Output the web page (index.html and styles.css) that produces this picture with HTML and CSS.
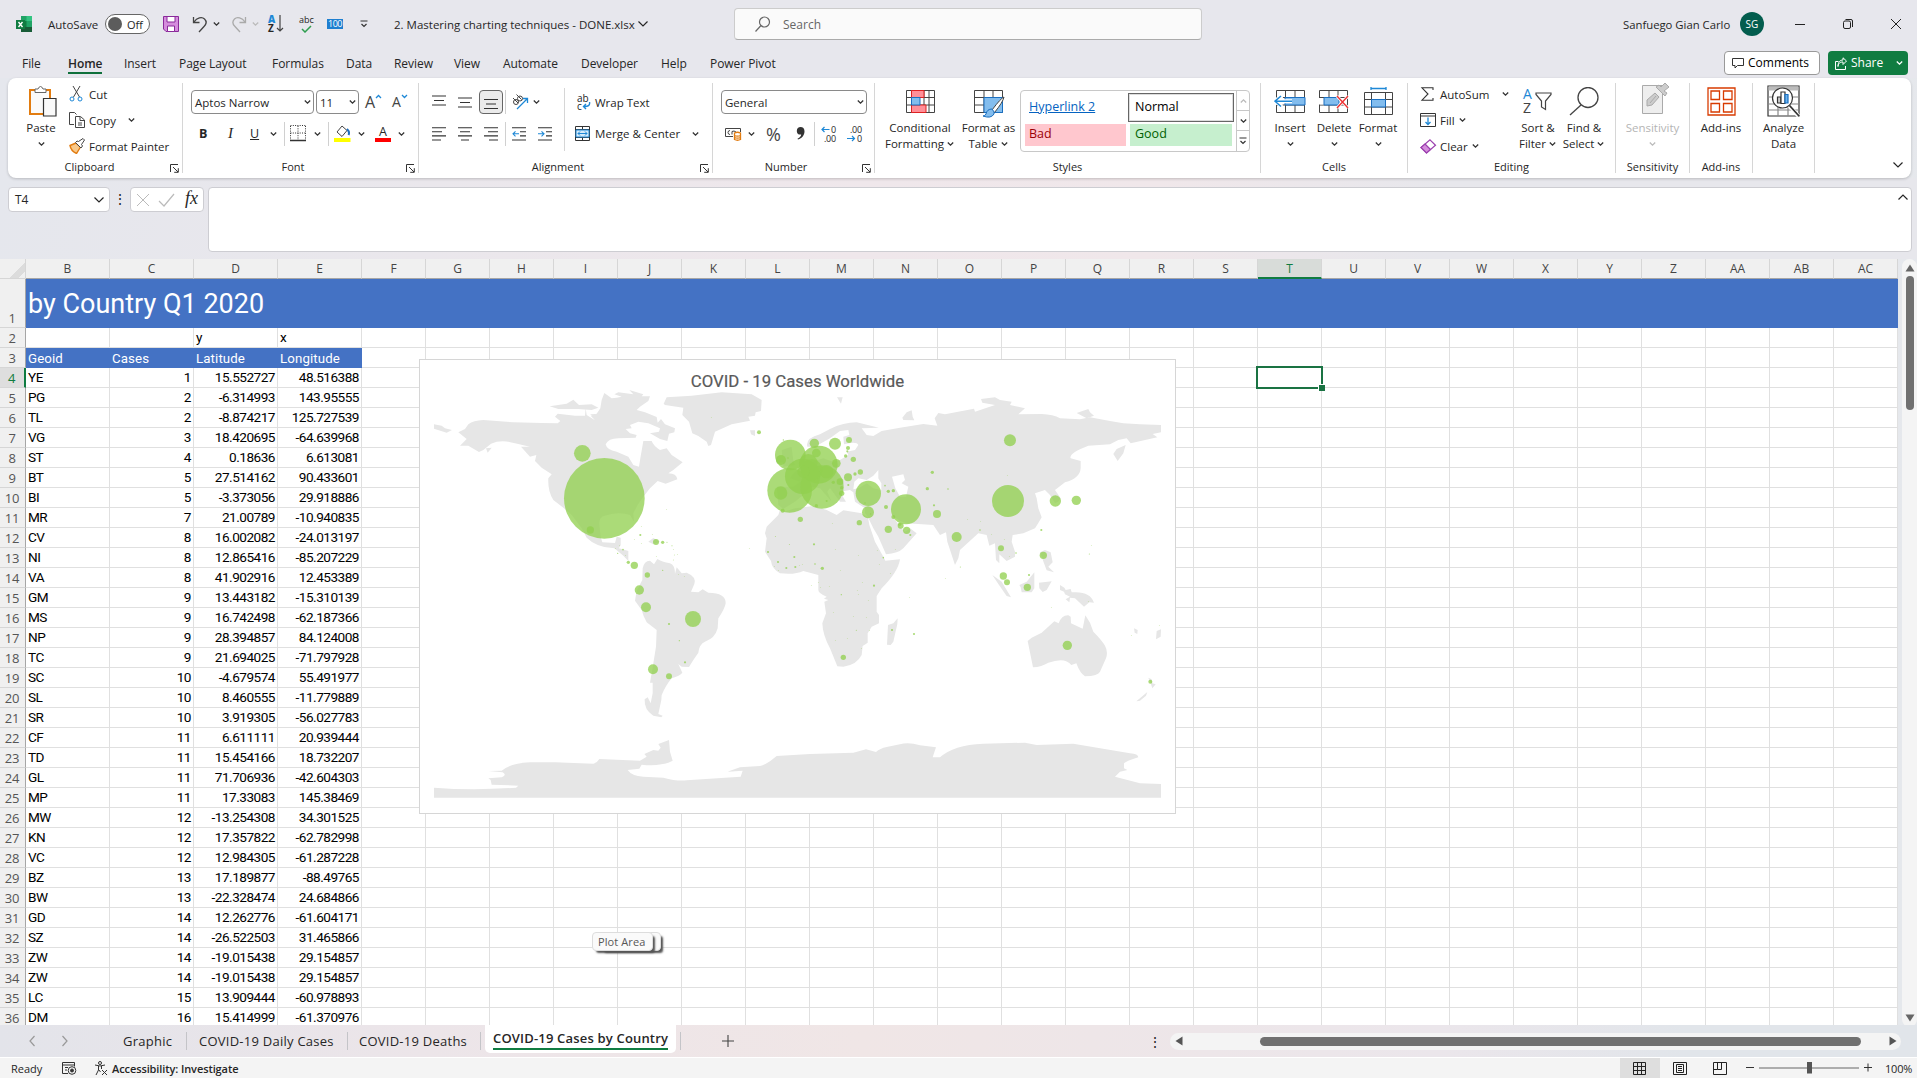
FILE: index.html
```html
<!DOCTYPE html>
<html lang="en">
<head>
<meta charset="utf-8">
<title>2. Mastering charting techniques - DONE.xlsx</title>
<link rel="stylesheet" href="styles.css">
</head>
<body>
<svg class="defs" aria-hidden="true">
  <symbol id="cv" viewBox="0 0 9 6"><path d="M1.8 1.5 4.5 4.2 7.2 1.5" fill="none" stroke="currentColor" stroke-width="1.3"/></symbol>
  <symbol id="cvl" viewBox="0 0 12 8"><path d="M1.5 1.5 6 6 10.5 1.5" fill="none" stroke="currentColor" stroke-width="1.2"/></symbol>
  <symbol id="launch" viewBox="0 0 9 9"><path d="M.5 8V.5H8M3 3l5 5M8.3 4.2v4.1H4.2" fill="none" stroke="#333"/></symbol>
</svg>

<header class="titlebar">
  <svg class="xl" width="17" height="17" viewBox="0 0 17 17"><path fill="#21a366" d="M5 0h11v16H5z"/><path fill="#33c481" d="M10.500 0h5.500v5h-5.500z"/><path fill="#107c41" d="M5 5h5.500v6H5z"/><path fill="#185c37" d="M5 11h11v5H5z"/><path fill="#107c41" d="M0 4h9v9H0z"/><path d="m2.500 6 4 5M6.500 6l-4 5" stroke="#fff" stroke-width="1.400"/></svg>
  <span>AutoSave</span>
  <span class="toggle"><i></i>Off</span>
  <svg width="17" height="17" viewBox="0 0 17 17" fill="#d58ddd" stroke="#8a2a9a"><path d="M.5.5h15v15H3l-2.500-2.500z"/><path fill="#fff" d="M4 .5h8v5.500H4zM4.500 10h7v5.500h-7z"/></svg>
  <svg width="17" height="17" viewBox="0 0 17 17" fill="none" stroke="#444" stroke-width="1.300"><path d="M1.500 1v5.500h6M2 6C5 1.500 10 .5 12.500 3s2 5-.5 7.500L7 16"/></svg>
  <svg class="cv"><use href="#cv"/></svg>
  <svg width="17" height="17" viewBox="0 0 17 17" fill="none" stroke="#aaa" stroke-width="1.300"><path d="M14.500 1v5.500h-6M14 6C11 1.500 6 .5 3.500 3s-2 5 .5 7.500L9 16"/></svg>
  <svg class="cv pale"><use href="#cv"/></svg>
  <span class="az"><b>A</b><em>Z</em><svg width="8" height="17" viewBox="0 0 8 17" fill="none" stroke="#444" stroke-width="1.200"><path d="M4 0v16M1 13l3 3 3-3"/></svg></span>
  <span class="abc">abc<svg width="11" height="8" viewBox="0 0 11 8"><path d="M1 4l3 3 6-6" fill="none" stroke="#2e9e4f" stroke-width="1.500"/></svg></span>
  <span class="hundred">100</span>
  <svg width="8" height="8" viewBox="0 0 8 8" fill="none" stroke="#333" stroke-width="1.200"><path d="M.5 1h7M1.500 4 4 6.500 6.500 4"/></svg>
  <span class="fname">2. Mastering charting techniques - DONE.xlsx</span>
  <svg width="12" height="8"><use href="#cvl"/></svg>
  <div class="search"><svg width="16" height="16" viewBox="0 0 16 16" fill="none" stroke="#666" stroke-width="1.200"><circle cx="9.500" cy="6" r="5"/><path d="m6 9.500-5.500 6"/></svg><span>Search</span></div>
  <span class="user">Sanfuego Gian Carlo</span>
  <span class="avatar">SG</span>
  <svg width="12" height="12" viewBox="0 0 12 12"><path d="M1 6.500h10" stroke="#222"/></svg>
  <svg width="12" height="12" viewBox="0 0 12 12" fill="none" stroke="#222"><rect x="1.500" y="3" width="7" height="7.500" rx="1.500"/><path d="M3.500 1.500H9q1.500 0 1.500 1.500v6"/></svg>
  <svg width="12" height="12" viewBox="0 0 12 12" stroke="#222"><path d="m1 1 10 10M11 1 1 11"/></svg>
</header>

<nav class="menu">
  <span>File</span><span class="on">Home</span><span>Insert</span><span>Page Layout</span><span>Formulas</span><span>Data</span><span>Review</span><span>View</span><span>Automate</span><span>Developer</span><span>Help</span><span>Power Pivot</span>
  <button class="comments"><svg width="12" height="12" viewBox="0 0 12 12" fill="none" stroke="#333"><path d="M.5 1.500h11v7H5.500L3 11V8.500H.5z"/></svg>Comments</button>
  <button class="share"><svg width="12" height="13" viewBox="0 0 12 13" fill="none" stroke="#fff"><path d="M3.500 4.500h-3v8h10V9M3 9.500C3.500 6 5 5 8 5v2.500L11.500 4 8 .8V3C5 3 3 5 3 9.500z"/></svg>Share<svg class="cv"><use href="#cv"/></svg></button>
</nav>

<section class="ribbon">
  <div class="group clipboard">
    <div class="body">
      <div class="big"><span class="ico"><svg width="30" height="31" viewBox="0 0 30 31"><path d="M1 4h20v24H1z" fill="#fafafa" stroke="#e27c10" stroke-width="2"/><path d="M6 6.500V3h3q1-2.500 2.500-2.500T14 3h3v3.500z" fill="#fff" stroke="#666"/><path d="M14.500 12.500H27v17.500H14.500z" fill="#fafafa" stroke="#333" stroke-width="1.200"/></svg></span><span>Paste</span><svg class="cv"><use href="#cv"/></svg></div>
      <div class="stack">
        <div><svg width="17" height="16" viewBox="0 0 17 16" fill="none" stroke="#444"><path d="M4 0l6.500 11M11 0 4.500 11"/><circle cx="3" cy="13" r="2" stroke="#1e88d6"/><circle cx="11" cy="13" r="2" stroke="#1e88d6"/></svg>Cut</div>
        <div><svg width="17" height="16" viewBox="0 0 17 16" fill="#fff" stroke="#444"><path d="M5 12.500H.5V.5h5l2 2M6.500 4.500h5L15.500 8v7.500h-9z"/><path d="M11 5v3.500h4M9 11h4M9 13h4" fill="none"/></svg>Copy<svg class="cv gap"><use href="#cv"/></svg></div>
        <div><svg width="17" height="16" viewBox="0 0 17 16"><path d="M7 5 1 7.500Q2 13 7.500 15.500L11.500 9z" fill="#f9c98a" stroke="#e27c10" stroke-width="1.400"/><path d="m6.500 4.500 5.500 5.500 1.500-2-1-1.500 3-4.500-1.500-1.500L9.500 3.500 8 3z" fill="#fff" stroke="#444"/></svg>Format Painter</div>
      </div>
    </div>
    <div class="label">Clipboard<svg class="launch"><use href="#launch"/></svg></div>
  </div>

  <div class="group font">
    <div class="body rows">
      <div class="r1"><span class="combo">Aptos Narrow<svg class="cv"><use href="#cv"/></svg></span><span class="combo">11<svg class="cv"><use href="#cv"/></svg></span><span class="fs1">A<svg width="7" height="5" viewBox="0 0 7 5"><path d="M1 4 3.500 1.500 6 4"/></svg></span><span class="fs2">A<svg width="7" height="5" viewBox="0 0 7 5"><path d="M1 1 3.500 3.500 6 1"/></svg></span></div>
      <div class="r2"><b>B</b><i>I</i><u>U</u><svg class="cv"><use href="#cv"/></svg><hr>
        <svg width="16" height="17" viewBox="0 0 16 17" fill="none" stroke="#333"><path d="M.5.5h15M.5 8h15M.5 1v14M8 1v14M15.500 1v14" stroke-dasharray="1 1.300"/><path d="M0 15.500h16" stroke-width="1.500"/></svg><svg class="cv"><use href="#cv"/></svg><hr>
        <svg width="17" height="17" viewBox="0 0 17 17"><path d="m8 1-5 6 5 4.500 5-6z" fill="#fff" stroke="#444"/><path d="M13 4q3 3 1.500 6" stroke="#1e6fc0" stroke-width="2" fill="none"/><path fill="#ff0" d="M0 13h16.500v4H0z"/></svg><svg class="cv"><use href="#cv"/></svg>
        <span class="acol">A</span><svg class="cv"><use href="#cv"/></svg></div>
    </div>
    <div class="label">Font<svg class="launch"><use href="#launch"/></svg></div>
  </div>

  <div class="group align">
    <div class="body">
      <div class="rows left">
        <div class="r1"><svg width="15" height="14" viewBox="0 0 15 14" stroke="#333" stroke-width="1.100"><path d="M0 1h14M2 5.500h10M0 10h14"/></svg><svg width="15" height="14" viewBox="0 0 15 14" stroke="#333" stroke-width="1.100"><path d="M0 3h14M2 7.500h10M0 12h14"/></svg><span class="pressed"><svg width="15" height="14" viewBox="0 0 15 14" stroke="#333" stroke-width="1.100"><path d="M0 13.500h14M2 9h10M0 4.500h14"/></svg></span><hr><svg width="17" height="16" viewBox="0 0 17 16" fill="none"><circle cx="4" cy="8" r="2.500" stroke="#444"/><circle cx="8" cy="4.500" r="2.500" stroke="#444"/><path d="m1 4 5 5M4.500.5l5 5" stroke="#444"/><path d="m5 15 10-10M11 4.500h4.500V9" stroke="#1e88d6" stroke-width="1.300"/></svg><svg class="cv"><use href="#cv"/></svg></div>
        <div class="r2"><svg width="15" height="14" viewBox="0 0 15 14" stroke="#333" stroke-width="1.100"><path d="M0 .7h14M0 4.800h10M0 8.900h14M0 13h9"/></svg><svg width="15" height="14" viewBox="0 0 15 14" stroke="#333" stroke-width="1.100"><path d="M0 .7h14M2 4.800h10M0 8.900h14M3 13h8"/></svg><svg width="15" height="14" viewBox="0 0 15 14" stroke="#333" stroke-width="1.100"><path d="M0 .7h14M4 4.800h10M0 8.900h14M5 13h9"/></svg><hr><svg width="15" height="14" viewBox="0 0 15 14" stroke="#333" stroke-width="1.100" fill="none"><path d="M0 .7h14M8 4.800h6M8 8.900h6M0 13h14"/><path d="M7 6.800H1M3.500 4.300 1 6.800l2.500 2.500" stroke="#1e88d6"/></svg><svg width="15" height="14" viewBox="0 0 15 14" stroke="#333" stroke-width="1.100" fill="none"><path d="M0 .7h14M8 4.800h6M8 8.900h6M0 13h14"/><path d="M0 6.800h6M3.500 4.300 6 6.800 3.500 9.300" stroke="#1e88d6"/></svg></div>
      </div>
      <div class="rows right">
        <div class="r1"><span class="wrapico"><span>ab</span><span>c<svg width="9" height="8" viewBox="0 0 9 8" fill="none" stroke="#1e88d6" stroke-width="1.400"><path d="M7.500 0q1 5-6 4.500M4 2 1.500 4.500 4 7"/></svg></span></span><span>Wrap Text</span></div>
        <div class="r2"><svg width="16" height="15" viewBox="0 0 16 15" fill="none" stroke="#333"><path d="M.5.5h14v14H.5zM.5 3.500h14M.5 11.500h14M7.500.5v3M7.500 11.500v3"/><path d="M1 4h13v7H1z" fill="#d5ebfa" stroke="#1e88d6"/><path d="M3 7.500h9M5 5.500l-2 2 2 2M10 5.500l2 2-2 2" stroke="#1e88d6"/></svg><span>Merge &amp; Center</span><svg class="cv"><use href="#cv"/></svg></div>
      </div>
    </div>
    <div class="label">Alignment<svg class="launch"><use href="#launch"/></svg></div>
  </div>

  <div class="group number">
    <div class="body rows">
      <div class="r1"><span class="combo">General<svg class="cv"><use href="#cv"/></svg></span></div>
      <div class="r2"><svg width="17" height="14" viewBox="0 0 17 14" fill="none" stroke="#444"><path d="M8 9.500H.5v-8h15V5"/><path d="M5 3.500q-2 0-2 2t2 2M7 7.500v-3l2-.5 2 1"/><path d="M9.500 6q3-1.500 6 0v6.500q-3 1.500-6 0zM9.500 8.500q3 1.200 6 0M9.500 10.500q3 1.200 6 0" fill="#fff" stroke="#e27c10" stroke-width="1.300"/></svg><svg class="cv"><use href="#cv"/></svg><span class="pct">%</span><svg width="9" height="13" viewBox="0 0 9 13"><path d="M4.500 0C7 0 8.500 1.600 8.500 4.200c0 4-2.500 7-6.500 8.300l-.5-.8c2.500-1.200 3.500-2.500 3.700-4.200C2.500 8 .8 6.300.8 3.900.8 1.500 2.400 0 4.500 0z" fill="#333"/></svg><hr>
        <span class="dec"><span><svg width="9" height="7" viewBox="0 0 9 7"><path d="M8.500 3.500H1M3.500 1 1 3.500 3.500 6"/></svg>0</span><span>.00</span></span>
        <span class="dec"><span>.00</span><span><svg width="9" height="7" viewBox="0 0 9 7"><path d="M0 3.500h7.500M5 1l2.500 2.500L5 6"/></svg>0</span></span></div>
    </div>
    <div class="label">Number<svg class="launch"><use href="#launch"/></svg></div>
  </div>

  <div class="group styles">
    <div class="body">
      <div class="big"><span class="ico"><svg width="29" height="23" viewBox="0 0 29 23" fill="none" stroke="#444"><path d="M.5.5h28v22H.5zM.5 7.500h28M.5 15h28M5.500.5v22M18 .5v22M23 .5v22"/><path d="M5.500.5H18v7H5.500zM5.500 15H20v7.500H5.500z" fill="#ff8f98" stroke="#d22"/><path d="M5.500 7.500H14V15H5.500z" fill="#83bdee" stroke="#1a6fc0"/></svg></span><span>Conditional</span><span>Formatting<svg class="cv"><use href="#cv"/></svg></span></div>
      <div class="big"><span class="ico tbl"><svg width="31" height="28" viewBox="0 0 31 28" fill="none" stroke="#444"><path d="M.5.5h28v22H.5zM.5 7.500h28M.5 15h28M10 .5v22M19 .5v22"/><path d="M10 7.500h18.500v15H10z" fill="#83bdee" stroke="#1a6fc0"/><path d="M30 7q-3 1-12 13l2.500 2.500Q29 12 30 7z" fill="#fff"/><path d="M18 19q-5 0-6 5-1 2-3 2 8 3 11-2 1-2-2-5z" fill="#83bdee" stroke="#1a6fc0"/></svg></span><span>Format as</span><span>Table<svg class="cv"><use href="#cv"/></svg></span></div>
      <div class="gallery"><div class="cells"><span class="hl">Hyperlink 2</span><span class="nm">Normal</span><span class="bad">Bad</span><span class="good">Good</span></div><div class="gbtn"><svg class="cv pale up"><use href="#cv"/></svg><svg class="cv"><use href="#cv"/></svg><svg width="8" height="8" viewBox="0 0 8 8" fill="none" stroke="#333" stroke-width="1.200"><path d="M.5 1h7M1.500 4 4 6.500 6.500 4"/></svg></div></div>
    </div>
    <div class="label">Styles</div>
  </div>

  <div class="group cellsg">
    <div class="body">
      <div class="big"><span class="ico"><svg width="32" height="23" viewBox="0 0 32 23" fill="none" stroke="#444"><path d="M2.500 7V.5h28v22h-28V15M11.500.5v22M21 .5v22M2.500 7.500h28M2.500 15h28"/><path d="M11 7.500h20V15H11z" fill="#83bdee" stroke="#1a6fc0"/><path d="M8 6 1.500 11.200 8 16.500M2 11.200h16" stroke="#fff" stroke-width="4"/><path d="M7 6 1 11.200l6 5.300M1 11.200h17" stroke="#1e88d6" stroke-width="1.500"/></svg></span><span>Insert</span><svg class="cv"><use href="#cv"/></svg></div>
      <div class="big"><span class="ico"><svg width="30" height="23" viewBox="0 0 30 23" fill="none" stroke="#444"><path d="M.5.5h28v22H.5zM10 .5v22M19 .5v22M.5 7.500h28M.5 15h28"/><path d="M-1 8h6v6.500h-6z" fill="#fff" stroke="none"/><path d="M5 7.500h15V15H5z" fill="#83bdee" stroke="#1a6fc0"/><path d="m18 6 11 12M29 6 18 18" stroke="#fff" stroke-width="3"/><path d="m18 6 11 12M29 6 18 18" stroke="#e33" stroke-width="1.400"/></svg></span><span>Delete</span><svg class="cv"><use href="#cv"/></svg></div>
      <div class="big"><span class="ico"><svg width="29" height="28" viewBox="0 0 29 28" fill="none" stroke="#444"><path d="M.5 5.500h28v22H.5zM7.500 5.500v22M21.500 5.500v22M.5 12.500h28M.5 20h28"/><path d="M7.500 12.500h14V20h-14z" fill="#83bdee" stroke="#1a6fc0"/><path d="M7.500 1.500h14M7 0v3M22 0v3" stroke="#1e88d6" stroke-width="1.300"/></svg></span><span>Format</span><svg class="cv"><use href="#cv"/></svg></div>
    </div>
    <div class="label">Cells</div>
  </div>

  <div class="group editing">
    <div class="body">
      <div class="stack">
        <div><svg width="17" height="14" viewBox="0 0 17 14" fill="none" stroke="#333" stroke-width="1.100"><path d="M13 3V.8H2L8 7l-6 6.200h11V11"/></svg>AutoSum<svg class="cv end"><use href="#cv"/></svg></div>
        <div><svg width="17" height="14" viewBox="0 0 17 14" fill="none" stroke="#333"><path d="M.5.5h15v13H.5zM.5 3h15"/><path d="M8 4.500v7M5.500 9 8 11.500 10.500 9" stroke="#1e88d6" stroke-width="1.300"/></svg>Fill<svg class="cv"><use href="#cv"/></svg></div>
        <div><svg width="17" height="15" viewBox="0 0 17 15" fill="#fff" stroke="#9b3fae" stroke-width="1.200"><path d="m10 .8 5.500 5.500L6.500 14 1 8.500z"/><path d="m5 5 5.500 5.500-4 3.500L1 8.500z" fill="#d58ddd"/></svg>Clear<svg class="cv"><use href="#cv"/></svg></div>
      </div>
      <div class="big"><span class="ico"><span class="azb"><b>A</b><em>Z</em><svg width="17" height="19" viewBox="0 0 17 19" fill="none" stroke="#444" stroke-width="1.200"><path d="M1 1h15v1.500L10.500 9v8.500L6.500 15V9L1 2.500z"/></svg></span></span><span>Sort &amp;</span><span>Filter<svg class="cv"><use href="#cv"/></svg></span></div>
      <div class="big"><span class="ico"><svg width="30" height="29" viewBox="0 0 30 29" fill="none" stroke="#444" stroke-width="1.300"><circle cx="19" cy="10.500" r="10"/><path d="M12 18 1 28"/></svg></span><span>Find &amp;</span><span>Select<svg class="cv"><use href="#cv"/></svg></span></div>
    </div>
    <div class="label">Editing</div>
  </div>

  <div class="group sens">
    <div class="body"><div class="big off"><span class="ico"><svg width="28" height="31" viewBox="0 0 28 31" fill="#eee" stroke="#aaa"><path d="M.5 2.500h20v28H.5z"/><path d="m5 17 8-7 4 4-7 8-5 1zM14 4l9 9 2-3-3-2 5-4-4-4-4 4-2-2z" fill="#ccc"/><path d="m8 20 6-7"/></svg></span><span>Sensitivity</span><svg class="cv"><use href="#cv"/></svg></div></div>
    <div class="label">Sensitivity</div>
  </div>
  <div class="group addins">
    <div class="body"><div class="big"><span class="ico"><svg width="29" height="29" viewBox="0 0 29 29" fill="none" stroke="#d83b01" stroke-width="1.300"><path d="M1 1h27v27H1zM4 4h8.500v8.500H4zM16.500 4H25v8.500h-8.500zM4 16.500h8.500V25H4zM16.500 16.500H25V25h-8.500z"/></svg></span><span>Add-ins</span></div></div>
    <div class="label">Add-ins</div>
  </div>
  <div class="group analyze">
    <div class="body"><div class="big"><span class="ico"><svg width="33" height="32" viewBox="0 0 33 32" fill="none" stroke="#333" stroke-width="1.200"><path d="M1 1h31v30H1z" fill="#fff"/><path d="M1.500 1.500h30v4h-30z" fill="#bbb" stroke="none"/><path d="M1 12h31M1 19h31M1 25h31M11 19v12M21 19v12" stroke="#888"/><circle cx="15.500" cy="13" r="10" fill="#fff"/><path d="M10.500 12h3.500v6h-3.500z" fill="#ccc"/><path d="M14 7h4v11.500h-4z" fill="#fff"/><path d="M18 9.500h3v8.500h-3z" fill="#6db4f0" stroke="#1a6fc0"/><path d="m22.500 21 9 10" stroke="#fff" stroke-width="4"/><path d="m22.500 20.500 9.500 10.500" stroke-width="1.800"/></svg></span><span>Analyze</span><span>Data</span></div></div>
    <div class="label"></div>
  </div>
  <svg class="collapse" width="12" height="8"><use href="#cvl"/></svg>
</section>

<section class="formula">
  <div class="namebox">T4<svg width="12" height="8"><use href="#cvl"/></svg></div>
  <div class="dots">⋮</div>
  <div class="fx"><svg width="14" height="14" viewBox="0 0 14 14" stroke="#bbb" fill="none"><path d="m1 1 12 12M13 1 1 13"/></svg><svg width="17" height="14" viewBox="0 0 17 14" stroke="#bbb" fill="none" stroke-width="1.200"><path d="m1 8 5 5L16 1"/></svg><i>fx</i></div>
  <div class="input"><svg class="up" width="12" height="8"><use href="#cvl"/></svg></div>
</section>

<main class="work">
  <div class="sheet" id="sheet">
    <div class="chart">
      <h2>COVID - 19 Cases Worldwide</h2>
      <svg width="757" height="455" viewBox="419 359 757 455">
        <g fill="#e6e6e6">
          <g transform="translate(415 355) scale(.33333)">
            <path d="M130 232 150 222 160 208Q175 196 205 195L295 202 380 204 428 205 436 198 420 185 428 176 480 182 510 182 512 160 515 180 540 196 527 182 545 176 556 160 560 135 568 114 590 130 605 128 620 125 598 118 610 112 655 118 643 105 685 118 680 124 705 124 700 138 675 155 665 165 690 172 725 186 728 203 738 192 750 208 780 220 778 232 762 236 757 258 735 252 705 235 732 230 735 220 700 205 670 200 645 210 650 220 632 222 645 235 665 240 662 248 610 250Q580 250 572 268 575 285 605 290L640 305 655 330 672 335 676 310 685 258 710 258Q715 272 735 285L755 280 770 300 803 322 775 345 760 355Q785 355 787 373L752 386 728 378 705 400 685 425 668 450 655 475 657 500 645 480Q610 468 570 482 553 485 553 505L557 545 562 562 600 564 605 545 617 548 617 570 612 580 640 588 640 618 625 602 598 580Q545 578 515 548L500 520 470 480 447 460 415 435Q398 410 400 370L410 358 380 338 360 318 364 300 345 305 318 275 345 275 300 265Q260 252 228 266L205 285 192 291 160 272 135 272 155 252ZM213 280 230 278 218 293Z"/>
            <path d="M57 208 80 212 90 220 111 225 95 233 57 221ZM404 154 455 146 475 134 492 150 530 148 550 158 530 165 490 162 430 162ZM525 178 545 177 556 187 540 187ZM746 146 755 127 830 122 920 112 1010 118 1040 135 1038 168 1022 172 1020 182 1000 185 1005 197 950 208 900 230 888 270 880 273 875 260 850 243 832 235 822 200 802 180 805 158 750 150ZM1005 226 1020 226 1020 243 1008 238ZM700 560 715 549 735 560 715 568Z"/>
          </g>
          <g transform="translate(740 355) scale(.33333)">
            <path d="M80 515 115 480 120 465 130 470 165 460 220 453 260 465 290 480 310 466 365 475 384 487 388 510 405 560 430 605 436 617 480 613Q475 650 425 700L410 723 410 770 417 780 417 805 395 815 383 835 383 863 368 873 365 900Q350 930 310 935L292 934 270 880Q248 840 247 805L258 775 253 740 265 735 252 731 260 725Q235 715 235 705L235 660 190 648Q165 660 120 655 95 640 93 618L75 590 80 550 75 535ZM125 285 155 275 160 315 165 330 130 335ZM108 305 128 300 130 322 110 325Z"/>
            <path d="M110 395 115 450 130 462 165 440 190 420 215 395 240 400 275 440 262 410 270 400 300 440 318 440 300 410 330 405 340 412 345 440 375 460 375 475 384 487 400 520 415 545 438 598Q475 595 490 580L530 535 510 520 495 530 480 515 455 480 480 498 500 505 580 510 600 540 618 532 622 560 645 630 655 610 660 585 715 535 740 540 748 572 765 565 768 615 778 625 778 598 800 618 825 605 825 590 815 560 818 540 850 535 885 520Q895 505 905 487L895 460 890 430 885 415 915 405 930 420 945 445 955 440 962 430 945 405 975 382Q1020 370 1022 340L1022 318 992 310Q985 295 1045 272L1110 268 1135 255 1160 250 1172 265 1252 247 1238 237 1263 232 1263 210 1200 208 1150 205 1110 198 1050 187 1020 193 960 190Q940 178 905 177L835 178 855 160 810 150 815 140 780 135 765 127 723 132 727 143 765 150 705 170 702 161 615 178 595 174 584 190 592 212 550 207 480 218 425 228 400 243 380 240 365 220 417 218 350 202Q310 202 270 222L240 238Q195 250 202 275L225 275 270 250 300 228 325 225 328 240 310 245 312 268Q350 258 355 270L345 285 320 290 325 300 300 315 280 320 250 310 215 320 190 330 160 355 150 370 180 380 160 395Z"/>
            <path d="M487 188 500 172 515 166 518 185 523 196 490 195ZM291 127 308 127 303 146ZM1010 174 1045 162 1050 172 1062 182 1040 190ZM1120 297 1130 282 1157 270 1150 295 1133 318ZM900 592 915 585 932 592 938 622 925 635 942 652 920 646 912 625Z"/>
            <path fill="#fff" d="M340 403 343 380 355 370 380 375 400 362 415 345 415 370 424 385 424 405 400 400 380 385 355 400ZM456 365 490 358 495 375 485 385 505 395 498 425 480 425 466 400Z"/>
          </g>
          <g transform="translate(500 560) scale(.33333)">
            <path d="M405 122 410 92 427 60 428 25Q432 3 450 2L462 13 472-3Q485 5 510 10 525 15 525 42L530 22 545 40 560 38Q590 50 583 72L573 95 595 97 608 88 625 98Q678 98 677 130 675 145 655 175L653 205Q645 235 615 245 598 252 595 278L580 300 567 321 545 320 535 312 547 338Q540 347 515 355 498 375 485 405L484 420 475 462 488 467 484 472 460 467Q432 450 434 418L443 412 452 430 458 400 458 368 450 368 460 310 468 260 470 210 440 187Q430 170 425 150Z"/>
            <path d="M-198 683Q-80 692 48 683L55 677-25 674-28 660-35 655 5 652Q22 645 8 637L-35 633 5 632Q30 610 90 607L165 607 280 611Q292 608 298 597L420 602 440 590 433 582 460 570 475 572 482 563 475 552 507 540 510 575 518 602Q485 620 425 614L418 626 383 630Q395 648 430 650L490 653Q530 664 560 661L722 650 728 632 682 635 720 622 780 618Q800 614 830 588L930 582 1060 578 1098 568 1128 576Q1140 565 1160 561L1200 553Q1225 545 1260 556L1308 562 1298 592 1320 592Q1360 555 1450 551L1575 548 1610 555 1720 551 1890 580Q1915 582 1915 592 1880 602 1872 610L1872 625 1882 630 1860 635 1845 650 1920 670 1983 672 1983 713-198 713Z"/>
          </g>
          <g transform="translate(860 560) scale(.33333)">
            <path d="M84 195 100 190 113 175 112 192 100 245 92 255 81 254ZM397 45 425 65 453 112 440 108 415 72ZM478 75 500 65 523 37 523 85 515 97 485 97 482 82ZM537 68 575 64 560 90 548 96 538 85ZM600 75 613 83 617 90 632 87 635 97Q690 92 702 128L688 127 672 140 645 115 630 113 628 127 617 118 630 110 615 103 612 95 600 90ZM503 243 515 233 545 218 583 184 596 190Q605 165 625 166L632 170 633 190 668 206 676 166 690 188 700 215Q725 240 735 257 745 275 738 295L720 335Q715 347 675 349 660 340 649 310L634 315Q615 290 565 308 545 320 519 322ZM865 353 875 358 877 370 887 373 877 385 872 370ZM829 424 862 396 858 407 840 422ZM822 205 833 210 832 222 824 218ZM890 213 903 208 902 230 888 238Z"/>
          </g>
        </g>
        <g id="bubbles" fill="#92d050" fill-opacity=".77"></g>
      </svg>
    </div>
    <div class="cursor"></div>
    <div class="tip back"></div><div class="tip">Plot Area</div>
  </div>
  <div class="vscroll"><svg width="10" height="8" viewBox="0 0 10 8"><path d="M5 .5 9.500 7.500H.5z" fill="#666"/></svg><i></i><svg width="10" height="8" viewBox="0 0 10 8"><path d="M5 7.500 9.500.5H.5z" fill="#666"/></svg></div>
</main>

<footer class="tabs">
  <svg width="8" height="12" viewBox="0 0 8 12"><path d="M6.500 1 2 6l4.500 5" fill="none" stroke="#999" stroke-width="1.200"/></svg>
  <svg width="8" height="12" viewBox="0 0 8 12"><path d="M1.500 1 6 6l-4.500 5" fill="none" stroke="#999" stroke-width="1.200"/></svg>
  <span>Graphic</span><hr><span>COVID-19 Daily Cases</span><hr><span>COVID-19 Deaths</span><hr>
  <span class="active"><b>COVID-19 Cases by Country</b></span><hr>
  <svg width="12" height="12" viewBox="0 0 12 12"><path d="M6 0v12M0 6h12" stroke="#444" stroke-width="1.100"/></svg>
  <span class="vd">⋮</span>
  <div class="hscroll"><svg width="8" height="10" viewBox="0 0 8 10"><path d="M.5 5 7.500.5v9z" fill="#555"/></svg><i></i><svg width="8" height="10" viewBox="0 0 8 10"><path d="M7.500 5 .5.5v9z" fill="#555"/></svg></div>
</footer>

<div class="status">
  <span>Ready</span>
  <svg width="15" height="14" viewBox="0 0 15 14" fill="none" stroke="#333"><path d="M6 12.500H.5v-11h12v4M.5 4h12M3 6.500h3M3 9h2"/><circle cx="10" cy="9.500" r="3.800"/><circle cx="10" cy="9.500" r="1.500" fill="#333"/></svg>
  <svg width="15" height="15" viewBox="0 0 15 15" fill="none" stroke="#333"><circle cx="6" cy="2" r="1.500"/><path d="M1 4q5 2 10 0M4.500 5v4L2 14M7.500 5v3M5 9l1.500 2M8 9l5 5M13 9l-5 5"/></svg>
  <b>Accessibility: Investigate</b>
  <span class="view on"><svg width="14" height="13" viewBox="0 0 14 13" fill="none" stroke="#222"><path d="M.5.5h12v12H.5zM4.500.5v12M8.500.5v12M.5 4.500h12M.5 8.500h12"/></svg></span>
  <span class="view"><svg width="14" height="13" viewBox="0 0 14 13" fill="none" stroke="#222"><path d="M.5.5h13v12H.5zM3.500 2.500h7v8h-7zM5 4.500h4M5 6.500h4M5 8.500h4"/></svg></span>
  <span class="view"><svg width="14" height="13" viewBox="0 0 14 13" fill="none" stroke="#222"><path d="M.5.5h13v12H.5zM4.500.5v7h4v-7M.5 7.500h4"/></svg></span>
  <span class="zoom"><svg width="130" height="12" viewBox="0 0 130 12"><path d="M1 5.500h8M119 5.500h8M123 1.500v8" stroke="#333" fill="none"/><path d="M14 6h100" stroke="#666"/><path d="M62 0h5v11.500h-5z" fill="#555"/></svg>100%</span>
</div>
<script src="sheet.js"></script>
</body>
</html>
```
FILE: styles.css
```css
* { box-sizing: border-box; }
body { margin: 0; width: 1917px; height: 1078px; overflow: hidden; display: flex; flex-direction: column; font: 11.5px "Open Sans", "Noto Sans", sans-serif; color: #262626; background: linear-gradient(100deg, #e5e7ed 0%, #e7e7ee 30%, #efe7eb 50%, #e7e7ec 70%, #e5e8ec 100%); }
svg { display: block; flex: none; }
.defs { position: absolute; width: 0; height: 0; }
.cv { width: 9px; height: 6px; color: #333; }
.pale { color: #bbb; }
.up { transform: rotate(180deg); }
hr { margin: 0; border: 0; width: 1px; background: #d0d0d0; }
button { font: inherit; }

.titlebar { height: 46px; flex: none; padding: 3px 0 0 16px; background: #e7e7ed; display: grid; align-items: center; white-space: nowrap;
  grid-template-columns: 32px 57px 58px 29px 20px 19px 20px 17px 31px 28px 33px 34px 243px 97px 889px 116px 55px 48px 48px 12px; }
.titlebar > * { margin-top: -1px; }
.toggle { width: 45px; height: 20px; border: 1px solid #666; border-radius: 10px; background: #fff; display: flex; align-items: center; gap: 5px; padding-left: 2px; font-size: 11px; }
.toggle i { width: 14px; height: 14px; border-radius: 50%; background: #5c5c5c; }
.az { display: grid; grid-template: 9px 9px / 8px 9px; font: bold 10px/9px "Open Sans", sans-serif; }
.az b { color: #1e88d6; }
.az em { font-style: normal; grid-row: 2; }
.az svg { grid-column: 2; grid-row: 1 / 3; }
.abc { font-size: 9px; line-height: 8px; display: flex; flex-direction: column; width: 15px; align-items: center; gap: 1px; }
.hundred { width: 16px; height: 10px; background: #1e7fd0; color: #fff; font-size: 9px; line-height: 10px; text-align: center; letter-spacing: -.5px; }
.search { width: 468px; height: 32px; background: #fafafa; border: 1px solid #ccc; border-bottom-color: #aaa; border-radius: 4px; display: flex; align-items: center; gap: 12px; padding-left: 20px; color: #666; font-size: 12px; }
.avatar { width: 24px; height: 24px; border-radius: 50%; background: #035d4e; color: #fff; text-align: center; line-height: 24px; font-size: 10px; margin-left: 1px; }
.user { font-size: 11.3px; }

.menu { height: 32px; flex: none; padding: 5px 0 0 22px; background: #e7e7ed; display: grid; font-size: 12px; white-space: nowrap; line-height: 26px;
  grid-template-columns: 46px 56px 55px 93px 74px 48px 60px 49px 78px 80px 49px 1014px 104px 80px; letter-spacing: -.05px; }
.menu .on { font-weight: 600; justify-self: start; height: 23px; border-bottom: 2px solid #0f703b; letter-spacing: -.1px; }
.menu button { height: 24px; border-radius: 4px; display: flex; align-items: center; gap: 4px; padding: 0 7px; }
.comments { width: 96px; border: 1px solid #999; background: #fff; }
.share { width: 80px; border: 0; background: #107c41; color: #fff; }
.share .cv { color: #fff; margin-left: 8px; }

.ribbon { margin: 0 6px 0 8px; height: 100px; flex: none; padding-top: 4px; background: #fff; border-radius: 8px; box-shadow: 0 1px 3px #0003; display: flex; position: relative; white-space: nowrap; }
.group { flex: none; height: 90px; border-right: 1px solid #d6d6d6; display: flex; flex-direction: column; margin-top: 1px; }
.body { height: 77px; flex: none; display: flex; }
.label { height: 16px; line-height: 16px; flex: none; font-size: 11px; margin-top: -1px; text-align: center; display: flex; justify-content: center; position: relative; }
.launch { width: 9px; height: 9px; position: absolute; right: 3px; top: 5px; }
.big { display: flex; flex-direction: column; align-items: center; margin-top: -1px; line-height: 16px; }
.big > span { display: flex; align-items: center; gap: 2px; }
.big > .cv { margin-top: 5px; }
.big .ico { height: 38px; }
.off { color: #b5b5b5; }
.off .cv { color: #bbb; }
.stack > div { height: 26px; display: flex; align-items: center; gap: 3px; }
.stack { margin-top: -2px; }
.stack .gap { margin-left: 8px; }
.stack .end { margin-left: auto; }
.rows { flex-direction: column; padding-top: 5px; }
.r1, .r2 { display: grid; align-items: center; }
.r1 { height: 28px; }
.r2 { height: 35px; }
.r1 hr, .r2 hr { height: 24px; }
.combo { height: 24px; border: 1px solid #8a8a8a; border-radius: 4px; display: flex; align-items: center; justify-content: space-between; padding: 0 1px 0 3px; }

.clipboard { width: 175px; }
.clipboard .big { width: 66px; }
.clipboard .big .ico { padding-left: 5px; }
.clipboard .stack { margin-left: -5px; }
.clipboard .label { padding-right: 11px; }
.font { width: 236px; }
.font .r1 { grid-template-columns: 125px 49px 27px 20px; padding-left: 8px; }
.font .combo { width: 123px; }
.font .combo + .combo { width: 43px; }
.fs1, .fs2 { font-size: 16px; color: #444; line-height: 20px; display: flex; }
.fs2 { font-size: 14px; }
.font .fs1 svg, .font .fs2 svg { fill: none; stroke: #1e88d6; stroke-width: 1.3; margin-top: 2px; }
.font .r2 { grid-template-columns: 26px 25px 19px 15px 6px 23px 15px 6px 23px 18px 22px 10px; padding-left: 16px; font-size: 12.5px; }
.font .r2 > * { justify-self: start; }
.font .r2 i { font-family: "Liberation Serif", serif; font-size: 15px; padding-left: 3px; }
.font .label, .align .label, .number .label { padding-right: 15px; }
.acol { width: 16px; border-bottom: 4px solid red; text-align: center; line-height: 13px; }
.align { width: 294px; }
.align .left { width: 145px; }
.align .left .r1 { grid-template-columns: 26px 21px 26px 7px 20px 10px; padding-left: 13px; }
.align .left .r2 { grid-template-columns: 26px 26px 21px 7px 26px 16px; padding-left: 13px; }
.pressed { width: 24px; height: 24px; border: 1px solid #666; border-radius: 4px; background: #ebebeb; display: grid; place-items: center; }
.align .right { border-left: 1px solid #d6d6d6; height: 63px; margin-top: 5px; padding-top: 0; }
.align .right .r1, .align .right .r2 { grid-template-columns: 20px 96px 10px; padding-left: 10px; }
.align .right .r2 span { letter-spacing: .05px; }
.wrapico { font-size: 10px; line-height: 8px; padding-left: 2px; }
.align .wrapico span { display: flex; height: 8px; }
.number { width: 162px; }
.number .combo { width: 146px; }
.number .r1 { padding-left: 8px; }
.number .r2 { grid-template-columns: 22px 19px 30px 18px 6px 26px 18px; padding-left: 12px; }
.pct { font-size: 18px; letter-spacing: -1px; color: #444; }
.dec { font-size: 9px; line-height: 9px; width: 16px; letter-spacing: -.2px; }
.dec span { display: flex; justify-content: flex-end; align-items: center; gap: 1px; height: 9px; }
.dec svg { fill: none; stroke: #1e88d6; stroke-width: 1.2; }
.styles { width: 386px; }
.styles .big { width: 90px; }
.styles .big + .big { width: 47px; }
.styles .tbl { align-items: flex-start; padding: 8px 0 0 2px; }
.gallery { margin: 7px 0 0 8px; width: 230px; height: 62px; border: 1px solid #c8c8c8; border-radius: 4px; display: flex; font-size: 12.5px; }
.cells { width: 215px; display: grid; grid-template: 29px 22px / 101px 106px; padding: 2px 0 0 4px; gap: 2px 2px; line-height: 20px; }
.cells span { padding-left: 4px; }
.hl { color: #0563c1; text-decoration: underline; line-height: 28px; }
.cells .nm { border: 1.5px solid #666; box-shadow: inset 0 0 0 1px #ddd; color: #000; line-height: 26px; padding-left: 6px; }
.bad { background: #ffc7ce; color: #9c0006; }
.cells .good { background: #c6efce; color: #006100; margin: 0 2px; padding-left: 5px; }
.gbtn { flex: 1; border-left: 1px solid #c8c8c8; display: grid; grid-template-rows: 20px 20px 20px; background: linear-gradient(#c8c8c8, #c8c8c8) 0 19px / 100% 1px no-repeat, linear-gradient(#c8c8c8, #c8c8c8) 0 39px / 100% 1px no-repeat; }
.gbtn svg { place-self: center; }
.cellsg { width: 147px; }
.cellsg .big { width: 44px; }
.cellsg .big:first-child { margin-left: 7px; }
.editing { width: 208px; }
.editing .stack { width: 90px; margin-left: 12px; }
.editing .big { width: 46px; }
.editing .big:nth-child(2) { margin-left: 5px; }
.azb { display: grid; grid-template: 14px 14px / 12px 18px; font: 14px/14px "Open Sans", sans-serif; color: #444; }
.azb b { color: #1e88d6; font-weight: normal; }
.azb em { grid-row: 2; font-style: normal; }
.azb svg { grid-column: 2; grid-row: 1 / 3; align-self: center; }
.sens { width: 74px; }
.sens .ico { padding: 0 0 6px 6px; }
.addins { width: 63px; }
.analyze { width: 62px; }
.sens .big, .addins .big, .analyze .big { width: 100%; }
.collapse { margin: 79px 0 0 77px; }

.formula { height: 81px; flex: none; padding: 9px 3px 0 8px; display: flex; align-items: flex-start; background: linear-gradient(100deg, #e5e7ed 0%, #efe7eb 45%, #f0e7ea 60%, #e7e7ec 75%); }
.namebox, .fx, .input { background: #fff; border: 1px solid #cdcdd2; border-radius: 4px; }
.namebox { width: 102px; height: 25px; padding: 0 4px 0 6px; display: flex; align-items: center; justify-content: space-between; font-size: 12px; }
.dots { width: 20px; text-align: center; line-height: 24px; font-size: 14px; }
.fx { width: 74px; height: 25px; display: grid; grid-template-columns: 22px 27px 20px; align-items: center; padding-left: 5px; }
.fx i { font: italic 18px/20px "Liberation Serif", serif; margin-top: -3px; }
.input { width: 1704px; height: 65px; margin-left: 4px; padding: 5px 2px; display: flex; justify-content: flex-end; }

.work { height: 766px; flex: none; display: flex; gap: 4px; }
.sheet { width: 1898px; height: 766px; overflow: hidden; position: relative; background: #fff; }
.row { display: grid; height: 20px; grid-template-rows: 100%; grid-template-columns: 26px repeat(4, 84px) repeat(24, 64px); }
.row > span { border-right: 1px solid #e0e0e0; border-bottom: 1px solid #e0e0e0; font: 13.6px/19px Roboto, sans-serif; letter-spacing: -.5px; color: #000; padding: 0 2px; white-space: nowrap; }
.row > span:first-child { background: #f0f0f0; color: #555; text-align: center; font: 13px/20px "Open Sans", sans-serif; letter-spacing: -.3px; border-right-color: #a6a6a6; border-bottom-color: #d6d6d6; padding: 0 1px 0 0; }
.row > .num { text-align: right; }
.heads > span { background: #f0f0f0; color: #444; text-align: center; font: 12px/20px "Open Sans", sans-serif; letter-spacing: 0; border-right-color: #d6d6d6; border-bottom-color: #a6a6a6; }
.heads > span:first-child { border-right-color: #d6d6d6; background: linear-gradient(135deg, #f0f0f0 64%, #dcdcdc 64% 85%, #f0f0f0 85%); }
.heads > .sel { background: #d8dcd9; color: #107c41; border-bottom: 2px solid #107c41; }
.row.banner { height: 49px; }
.row.banner > span:first-child { padding-top: 30px; line-height: 18px; }
.row.banner > .title { grid-column: 2 / -1; background: #4472c4; border: 0; color: #fff; font-size: 27px; line-height: 50px; letter-spacing: 0; }
.row > .th { background: #4472c4; border-color: #4472c4; color: #fff; letter-spacing: .1px; font-size: 13.3px; line-height: 21px; }
.row.cur > span:first-child { background: #dedede; color: #107c41; border-right: 2px solid #107c41; }
.chart { position: absolute; left: 419px; top: 100px; width: 757px; height: 455px; background: #fff; border: 1px solid #d6d6d6; }
.chart svg { position: absolute; left: -1px; top: -1px; }
.chart h2 { margin: 10px 0 0; text-align: center; font: 400 16.8px/22px Roboto, sans-serif; color: #595959; position: relative; -webkit-text-stroke: .2px #595959; }
.cursor { position: absolute; left: 1256px; top: 107px; width: 67px; height: 23px; border: 2px solid #1a7343; }
.cursor::after { content: ""; position: absolute; right: -4px; bottom: -4px; width: 6px; height: 6px; background: #1a7343; border: 1px solid #fff; border-width: 1px 0 0 1px; }
.tip { position: absolute; left: 592px; top: 673px; width: 61px; height: 19px; background: #fafafa; border: 1px solid #ddd; border-radius: 4px; box-shadow: 3px 3px 2px -1px #555; color: #575757; font-size: 11px; letter-spacing: .1px; line-height: 17px; padding-left: 5px; white-space: nowrap; }
.tip.back { left: 600px; }
.vscroll { width: 15px; height: 768px; background: #f4f4f4; border-radius: 8px; display: flex; flex-direction: column; align-items: center; padding: 5px 0; }
.vscroll i { width: 8px; height: 134px; border-radius: 4px; background: #707070; margin: 4px 0 auto; }

.tabs { height: 32px; flex: none; display: grid; align-items: center; white-space: nowrap; font-size: 13px; padding-left: 28px; background: linear-gradient(90deg, #e3e4ea, #ece5e9 22%, #f0e6e6 45%, #ebe6eb 75%, #e1e5ea 88%);
  grid-template-columns: 33px 62px 63px 13px 148px 12px 121px 5px 195px 42px 426px 22px 731px; }
.tabs hr { height: 18px; background: #c4c4c8; }
.tabs > span { letter-spacing: .25px; }
.tabs > .active { width: 191px; height: 28px; align-self: start; background: #fff; border-radius: 0 0 5px 5px; padding: 3px 8px 0; }
.active b { display: block; font-weight: 600; font-size: 13px; letter-spacing: .18px; line-height: 20px; border-bottom: 2px solid #107c41; }
.vd { font-size: 14px; }
.hscroll { height: 17px; background: #f4f4f4; border-radius: 9px; display: grid; align-items: center; grid-template-columns: 85px 629px 10px; padding-left: 5px; }
.hscroll i { width: 601px; height: 9px; border-radius: 5px; background: #707070; }

.status { height: 21px; flex: none; background: #f4f4f4; border-top: 1px solid #fff; display: grid; align-items: center; white-space: nowrap; font-size: 11px; padding-left: 11px;
  grid-template-columns: 51px 32px 18px 1508px 40px 40px 45px auto; }
.status b { font-weight: 600; letter-spacing: -.1px; }
.view { height: 20px; display: grid; place-items: center; width: 40px; }
.view.on { background: #dedede; }
.zoom { display: flex; align-items: center; gap: 10px; letter-spacing: -.2px; }
```
FILE: sheet.js
```js
const sheet = document.getElementById('sheet');
const cols = ['', 'B', 'C', 'D', 'E', ...'FGHIJKLMNOPQRSTUVWXYZ', 'AA', 'AB', 'AC'];
const data = `YE 1 15.552727 48.516388
PG 2 -6.314993 143.95555
TL 2 -8.874217 125.727539
VG 3 18.420695 -64.639968
ST 4 0.18636 6.613081
BT 5 27.514162 90.433601
BI 5 -3.373056 29.918886
MR 7 21.00789 -10.940835
CV 8 16.002082 -24.013197
NI 8 12.865416 -85.207229
VA 8 41.902916 12.453389
GM 9 13.443182 -15.310139
MS 9 16.742498 -62.187366
NP 9 28.394857 84.124008
TC 9 21.694025 -71.797928
SC 10 -4.679574 55.491977
SL 10 8.460555 -11.779889
SR 10 3.919305 -56.027783
CF 11 6.611111 20.939444
TD 11 15.454166 18.732207
GL 11 71.706936 -42.604303
MP 11 17.33083 145.38469
MW 12 -13.254308 34.301525
KN 12 17.357822 -62.782998
VC 12 12.984305 -61.287228
BZ 13 17.189877 -88.49765
BW 13 -22.328474 24.684866
GD 14 12.262776 -61.604171
SZ 14 -26.522503 31.465866
ZW 14 -19.015438 29.154857
ZW 14 -19.015438 29.154857
LC 15 13.909444 -60.978893
DM 16 15.414999 -61.370976`.split('\n').map(l => l.split(' '));

const span = (text, cls) => `<span${cls ? ` class="${cls}"` : ''}>${text}</span>`;
const row = (cells, cls = '') => `<div class="row ${cls}">${cells}</div>`;
const blanks = n => span('').repeat(n);

let html = row(cols.map(c => span(c, c === 'T' ? 'sel' : '')).join(''), 'heads');
html += row(span(1) + span('by Country Q1 2020', 'title'), 'banner');
html += row(span(2) + blanks(2) + span('y') + span('x') + blanks(24));
html += row(span(3) + ['Geoid', 'Cases', 'Latitude', 'Longitude'].map(t => span(t, 'th')).join('') + blanks(24));
data.forEach((d, i) => {
  html += row(span(i + 4) + span(d[0]) + d.slice(1).map(v => span(v, 'num')).join('') + blanks(24), i ? '' : 'cur');
});
sheet.insertAdjacentHTML('afterbegin', html);

// Bubbles by map region: origin, then x, y, radius in thirds of a pixel.
const regions = [
  [415, 355, '502 295 25,568 430 121,526 525 11,1032 232 6,723 561 9,743 562 5,676 540 4,624 584 3,640 622 5,658 631 11,697 660 8,673 705 14,889 187 1.500,755 463 1.500,679 514 1.500,658 553 1.500,679 565 1.500,712 538 1.500,756 562 2,771 572 2,775 584 1.500,778 600 1.500,787 598 1.500,775 615 1.500,608 595 2.500,601 580 1.500,614 571 1.500,632 602 1.500,724 604 1.500,743 646 2.500,790 658 1.500,808 664 1.500,1003 580 1.500,1081 544 1.500,1123 568 1.500'],
  [740, 355, '151 300 46,123 315 15,149 406 67,122 414 20,188 364 53,236 329 57,246 396 65,205 325 28,215 345 32,190 350 18,260 350 20,223 265 14,229 294 13,285 266 18,327 255 9,289 325 13,324 279 6,322 289 4,317 303 5,340 313 8,361 351 8,345 357 5,324 367 12,300 380 10,280 382 5,305 398 5,305 415 8,325 390 4,144 309 3,385 415 38,375 444 3,384 472 18,392 477 3,358 503 8,445 523 11,482 512 9,479 508 5,500 526 11,511 540 4,498 463 45,438 456 6,460 486 6,445 409 5,460 407 5,435 392 3,562 401 5,577 352 5,624 402 3,582 451 4,591 477 12,650 546 15,810 256 18,804 438 48,946 438 17,1009 436 14,910 601 11,783 580 9,790 663 11,801 682 9,862 697 11,867 660 4,904 525 4,828 594 3,720 525 3,722 499 1.500,683 493 1.500,755 538 1.500,793 553 1.500,802 361 1.500,808 604 1.500,661 636 2,616 670 1.500,181 493 8,128 467 6,260 438 4,229 452 5,222 568 4,84 591 4,163 606 4,114 621 4,139 639 4,166 636 4,225 627 3,247 640 5,402 692 4,430 608 3,412 586 1.500,418 628 1.500,466 583 1.500,451 656 1.500,355 601 1.500,286 583 1.500,277 505 1.500,301 646 1.500,148 568 1.500,106 544 1.500,103 634 1.500,115 646 1.500,178 631 1.500,187 628 1.500,214 691 1.500,235 682 1.500,241 697 1.500,268 694 1.500,367 682 1.500,352 706 1.500,1048 597 2,1054 571 1.500,130 255 2.500'],
  [500, 560, '438 142 15,579 177 24,507 192 4,538 242 2.500,555 307 4,459 328 15,507 349 9,1030 292 8,1176 210 4,1024 104 2.500,1000 157 1.500,1060 169 1.500,1099 172 1.500,1069 211 2,1108 211 1.500,1006 241 1.500,1042 235 1.500,1084 265 1.500,1105 121 1.500,1075 103 1.500'],
  [860, 560, '622 256 14,871 365 6,162 222 4,148 112 1.500,574 142 1.500,685 124 1.500,814 226 1.500,898 196 1.500'],
];
document.getElementById('bubbles').innerHTML = regions.map(([x, y, list]) =>
  `<g transform="translate(${x} ${y}) scale(.33333)">` + list.split(',').map(b => {
    const [cx, cy, r] = b.split(' ').map(Number);
    return `<circle cx="${cx}" cy="${cy}" r="${r < 5 ? r * .8 : r}"/>`;
  }).join('') + '</g>').join('');
```
